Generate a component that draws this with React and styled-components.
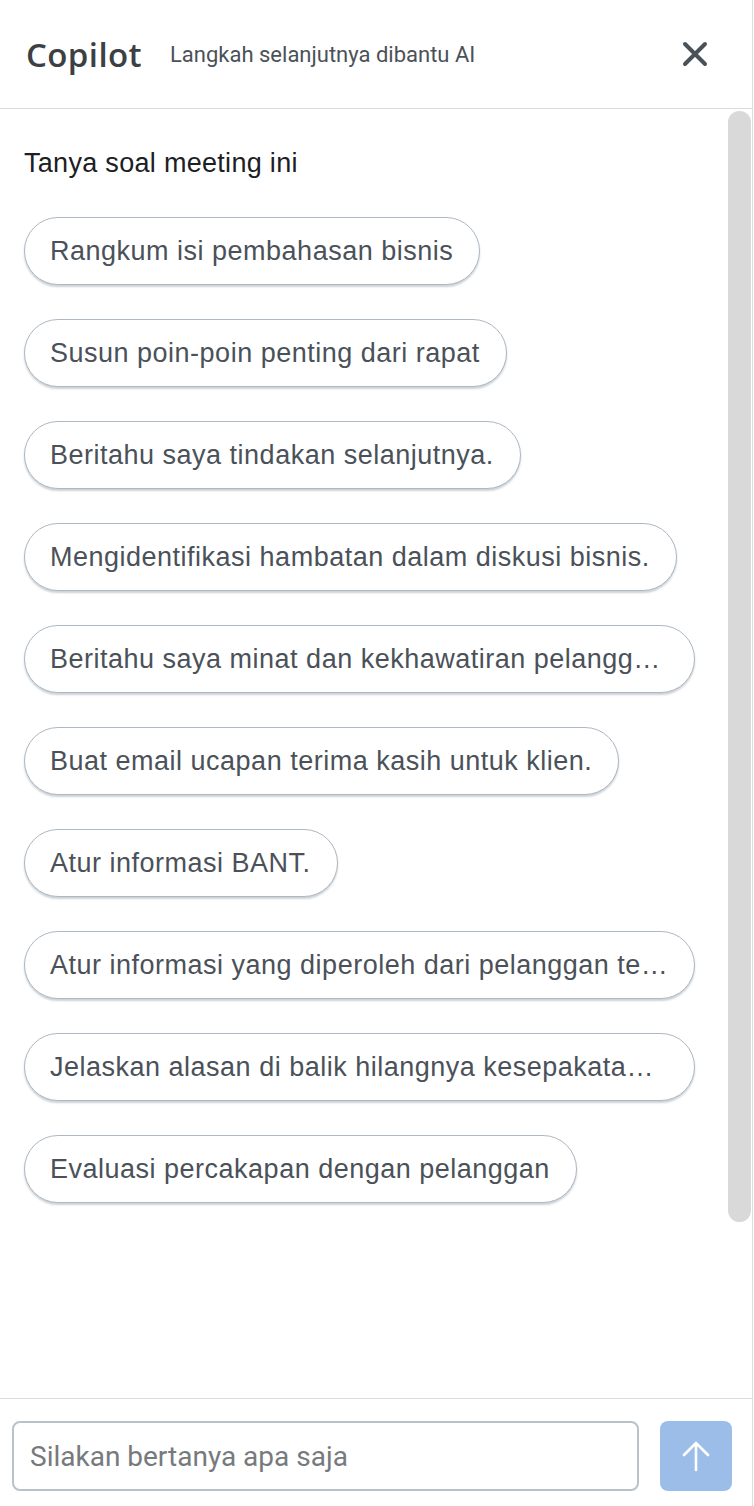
import React from "react";
import styled, { createGlobalStyle } from "styled-components";

const Global = createGlobalStyle`
  html, body { margin: 0; padding: 0; background: #ffffff; }
  body { overflow: hidden; font-family: "Liberation Sans", Arial, sans-serif; }
  * { box-sizing: border-box; }
`;

const Panel = styled.div`
  width: 753px;
  height: 1506px;
  border-right: 1px solid #dadfe4;
  display: flex;
  flex-direction: column;
  background: #fff;
`;

const Header = styled.header`
  height: 109px;
  flex: none;
  display: flex;
  align-items: center;
  padding: 0 44px 0 26px;
  border-bottom: 1px solid #d6dce1;
`;

const Brand = styled.h1`
  margin: 0;
  font-family: "Open Sans", Lato, sans-serif;
  font-weight: 600;
  font-size: 33px;
  letter-spacing: 0.4px;
  color: #3c3f44;
`;

const Subtitle = styled.span`
  margin-left: 28px;
  font-family: Roboto, "Liberation Sans", sans-serif;
  font-size: 22px;
  color: #4b5158;
  flex: 1;
`;

const CloseButton = styled.button`
  border: 0;
  background: none;
  padding: 0;
  width: 26px;
  height: 26px;
  display: flex;
  align-items: center;
  justify-content: center;
  cursor: pointer;
`;

const ScrollArea = styled.div`
  flex: 1;
  min-height: 0;
  position: relative;
`;

const Scroll = styled.main`
  height: 100%;
  overflow-y: auto;
  scrollbar-width: none;
  &::-webkit-scrollbar { display: none; }
`;

const ScrollThumb = styled.div`
  position: absolute;
  top: 2px;
  right: 1px;
  width: 23px;
  height: 1111px;
  border-radius: 12px;
  background: #d9d9d9;
`;

const Content = styled.div`
  padding: 39px 0 40px 24px;
`;

const Title = styled.h2`
  margin: 0 0 39px;
  font-weight: 400;
  font-size: 27px;
  line-height: 30px;
  letter-spacing: 0.3px;
  color: #1c2024;
`;

const ChipList = styled.div`
  display: flex;
  flex-direction: column;
  align-items: flex-start;
  gap: 34px;
`;

const Chip = styled.button`
  height: 68px;
  max-width: 671px;
  padding: 0 26px 0 25px;
  border: 1px solid #aeb8c2;
  border-radius: 34px;
  background: #fff;
  box-shadow: 0 2px 2px rgba(110, 125, 140, 0.35);
  font-family: "Liberation Sans", Arial, sans-serif;
  font-size: 27px;
  letter-spacing: 0.5px;
  color: #4b5159;
  white-space: nowrap;
  overflow: hidden;
  text-overflow: ellipsis;
  text-align: left;
  cursor: pointer;
`;

const Footer = styled.footer`
  flex: none;
  height: 108px;
  border-top: 1px solid #d6dce1;
  display: flex;
  align-items: flex-start;
  gap: 21px;
  padding: 22px 20px 0 12px;
`;

const Input = styled.input`
  flex: 1;
  height: 70px;
  border: 2px solid #bac2c9;
  border-radius: 8px;
  padding: 0 16px;
  font-family: Roboto, "Liberation Sans", sans-serif;
  font-size: 28px;
  color: #333;
  outline: none;
  &::placeholder { color: #777a7d; }
`;

const SendButton = styled.button`
  width: 72px;
  height: 70px;
  flex: none;
  border: 0;
  border-radius: 8px;
  background: #9dbde9;
  display: flex;
  align-items: center;
  justify-content: center;
  cursor: pointer;
`;

const prompts = [
  "Rangkum isi pembahasan bisnis",
  "Susun poin-poin penting dari rapat",
  "Beritahu saya tindakan selanjutnya.",
  "Mengidentifikasi hambatan dalam diskusi bisnis.",
  "Beritahu saya minat dan kekhawatiran pelanggan.",
  "Buat email ucapan terima kasih untuk klien.",
  "Atur informasi BANT.",
  "Atur informasi yang diperoleh dari pelanggan tentang kebutuhan mereka.",
  "Jelaskan alasan di balik hilangnya kesepakatan bisnis.",
  "Evaluasi percakapan dengan pelanggan",
];

export default function App() {
  return (
    <>
      <Global />
      <Panel>
        <Header>
          <Brand>Copilot</Brand>
          <Subtitle>Langkah selanjutnya dibantu AI</Subtitle>
          <CloseButton aria-label="Tutup">
            <svg width="26" height="26" viewBox="0 0 26 26">
              <path d="M3 3 L23 23 M23 3 L3 23" stroke="#4a5259" strokeWidth="4" strokeLinecap="round" fill="none" />
            </svg>
          </CloseButton>
        </Header>
        <ScrollArea>
          <Scroll>
            <Content>
              <Title>Tanya soal meeting ini</Title>
              <ChipList>
                {prompts.map((p) => (
                  <Chip key={p} title={p}>{p}</Chip>
                ))}
              </ChipList>
            </Content>
          </Scroll>
          <ScrollThumb />
        </ScrollArea>
        <Footer>
          <Input placeholder="Silakan bertanya apa saja" />
          <SendButton aria-label="Kirim">
            <svg width="30" height="32" viewBox="0 0 30 32">
              <path d="M15 30 V3 M3 15 L15 3 L27 15" stroke="#fff" strokeWidth="2.6" strokeLinecap="round" strokeLinejoin="round" fill="none" />
            </svg>
          </SendButton>
        </Footer>
      </Panel>
    </>
  );
}
